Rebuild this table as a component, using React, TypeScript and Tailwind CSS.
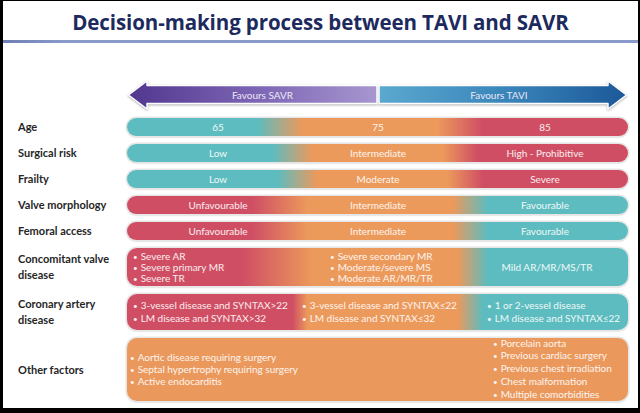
const rows = [
  {
    label: 'Age',
    bg: 'bg-[linear-gradient(90deg,#5dbcbf_0%,#5dbcbf_26%,#ec995c_35%,#ec995c_62%,#cf4e64_71%,#cf4e64_100%)]',
    cells: ['65', '75', '85'],
  },
  {
    label: 'Surgical risk',
    bg: 'bg-[linear-gradient(90deg,#5dbcbf_0%,#5dbcbf_29%,#ec995c_37%,#ec995c_63%,#cf4e64_70%,#cf4e64_100%)]',
    cells: ['Low', 'Intermediate', 'High - Prohibitive'],
  },
  {
    label: 'Frailty',
    bg: 'bg-[linear-gradient(90deg,#5dbcbf_0%,#5dbcbf_30%,#ec995c_38%,#ec995c_64%,#cf4e64_71%,#cf4e64_100%)]',
    cells: ['Low', 'Moderate', 'Severe'],
  },
  {
    label: 'Valve morphology',
    bg: 'bg-[linear-gradient(90deg,#cf4e64_0%,#cf4e64_25%,#ec995c_36%,#ec995c_65%,#5dbcbf_72%,#5dbcbf_100%)]',
    cells: ['Unfavourable', 'Intermediate', 'Favourable'],
  },
  {
    label: 'Femoral access',
    bg: 'bg-[linear-gradient(90deg,#cf4e64_0%,#cf4e64_25%,#ec995c_36%,#ec995c_65%,#5dbcbf_72%,#5dbcbf_100%)]',
    cells: ['Unfavourable', 'Intermediate', 'Favourable'],
  },
]

const pill =
  "rounded-[10px] text-white/90 font-['Lato',sans-serif] text-[10px] shadow-[0_0_0_1.5px_#e6e6e6,0_1px_2px_rgba(0,0,0,0.3)]"

function Label({ children }: { children: React.ReactNode }) {
  return (
    <div className="w-[109px] shrink-0 font-['Lato',sans-serif] font-bold text-[11px] leading-[16px] text-[#262626]">
      {children}
    </div>
  )
}

function Bullets({ items, className }: { items: string[]; className: string }) {
  return (
    <ul className={className}>
      {items.map((item) => (
        <li key={item} className="whitespace-nowrap">
          <span className="mr-[3px] text-[8px]">•</span>
          {item}
        </li>
      ))}
    </ul>
  )
}

function Arrow() {
  return (
    <div className="relative ml-[109px] w-[501px] h-[30px]">
      <svg
        className="absolute inset-0 drop-shadow-[0_1px_1px_rgba(0,0,0,0.3)]"
        width="501"
        height="30"
        viewBox="0 0 501 30"
      >
        <defs>
          <linearGradient id="savr" x1="0" x2="1" y1="0" y2="0">
            <stop offset="0" stopColor="#52368f" />
            <stop offset="0.5" stopColor="#7b64b3" />
            <stop offset="1" stopColor="#a796cf" />
          </linearGradient>
          <linearGradient id="tavi" x1="0" x2="1" y1="0" y2="0">
            <stop offset="0" stopColor="#5ba8cf" />
            <stop offset="0.5" stopColor="#3a86bb" />
            <stop offset="1" stopColor="#1c5898" />
          </linearGradient>
        </defs>
        <path
          d="M1.5 15 L20 1 L20 5.5 L250 5.5 L250 23.5 L20 23.5 L20 29 Z"
          fill="url(#savr)"
          stroke="#fff"
          strokeWidth="1.5"
          strokeLinejoin="round"
        />
        <path
          d="M252 5.5 L481 5.5 L481 1 L499.5 15 L481 29 L481 23.5 L252 23.5 Z"
          fill="url(#tavi)"
          stroke="#fff"
          strokeWidth="1.5"
          strokeLinejoin="round"
        />
      </svg>
      <div className="relative flex h-full font-['Lato',sans-serif] text-[10px] text-[#ece7f6]">
        <div className="w-[251px] flex items-center justify-center pl-[20px]">Favours SAVR</div>
        <div className="flex-1 flex items-center justify-center pr-[8px]">Favours TAVI</div>
      </div>
    </div>
  )
}

export default function App() {
  return (
    <div className="w-[640px] h-[413px] bg-black pt-[1px] pl-[3px] pr-[2px] pb-[5px]">
      <div className="h-full bg-white flex flex-col">
        <h1 className="h-[39px] pt-[4px] flex items-center justify-center font-['Open_Sans',sans-serif] font-bold text-[20.5px] text-[#1d2a5e] tracking-[-0.1px]">
          Decision-making process between TAVI and SAVR
        </h1>
        <div className="h-[3px] bg-[linear-gradient(90deg,#6f7fb6,#8a9acb_10%,#8a9acb)]" />

        <div className="pl-[15px] pt-[37px] flex flex-col">
          <Arrow />

          <div className="mt-[8px] flex flex-col gap-[8px]">
            {rows.map((row) => (
              <div key={row.label} className="flex items-center">
                <Label>{row.label}</Label>
                <div
                  className={`w-[501px] h-[18px] grid grid-cols-[182px_138px_1fr] items-center ${pill} ${row.bg}`}
                >
                  <div className="text-center">{row.cells[0]}</div>
                  <div className="text-center">{row.cells[1]}</div>
                  <div className="text-center pl-[15px]">{row.cells[2]}</div>
                </div>
              </div>
            ))}

            <div className="flex items-center">
              <Label>
                Concomitant valve
                <br />
                disease
              </Label>
              <div
                className={`w-[501px] h-[38px] flex items-center leading-[10px] ${pill} bg-[linear-gradient(90deg,#cf4e64_0%,#cf4e64_23%,#ec995c_37%,#ec995c_66%,#5dbcbf_72%,#5dbcbf_100%)]`}
              >
                <Bullets
                  className="w-[203px] pl-[6px]"
                  items={['Severe AR', 'Severe primary MR', 'Severe TR']}
                />
                <Bullets
                  className="w-[140px]"
                  items={['Severe secondary MR', 'Moderate/severe MS', 'Moderate AR/MR/TR']}
                />
                <div className="flex-1 text-center pr-[4px]">Mild AR/MR/MS/TR</div>
              </div>
            </div>

            <div className="flex items-center">
              <Label>
                Coronary artery
                <br />
                disease
              </Label>
              <div
                className={`w-[501px] h-[36px] flex items-center leading-[12px] ${pill} bg-[linear-gradient(90deg,#cf4e64_0%,#cf4e64_33%,#ec995c_36%,#ec995c_66%,#5dbcbf_71%,#5dbcbf_100%)]`}
              >
                <Bullets
                  className="w-[175px] pl-[6px]"
                  items={['3-vessel disease and SYNTAX>22', 'LM disease and SYNTAX>32']}
                />
                <Bullets
                  className="w-[185px]"
                  items={['3-vessel disease and SYNTAX≤22', 'LM disease and SYNTAX≤32']}
                />
                <Bullets
                  className="flex-1"
                  items={['1 or 2-vessel disease', 'LM disease and SYNTAX≤22']}
                />
              </div>
            </div>

            <div className="flex items-center">
              <Label>Other factors</Label>
              <div
                className={`w-[501px] h-[63px] flex items-center ${pill} bg-[#ea985c]`}
              >
                <Bullets
                  className="w-[366px] pl-[3px] leading-[11px] pt-[1px]"
                  items={[
                    'Aortic disease requiring surgery',
                    'Septal hypertrophy requiring surgery',
                    'Active endocarditis',
                  ]}
                />
                <Bullets
                  className="flex-1 leading-[11.7px]"
                  items={[
                    'Porcelain aorta',
                    'Previous cardiac surgery',
                    'Previous chest irradiation',
                    'Chest malformation',
                    'Multiple comorbidities',
                  ]}
                />
              </div>
            </div>
          </div>
        </div>
      </div>
    </div>
  )
}
